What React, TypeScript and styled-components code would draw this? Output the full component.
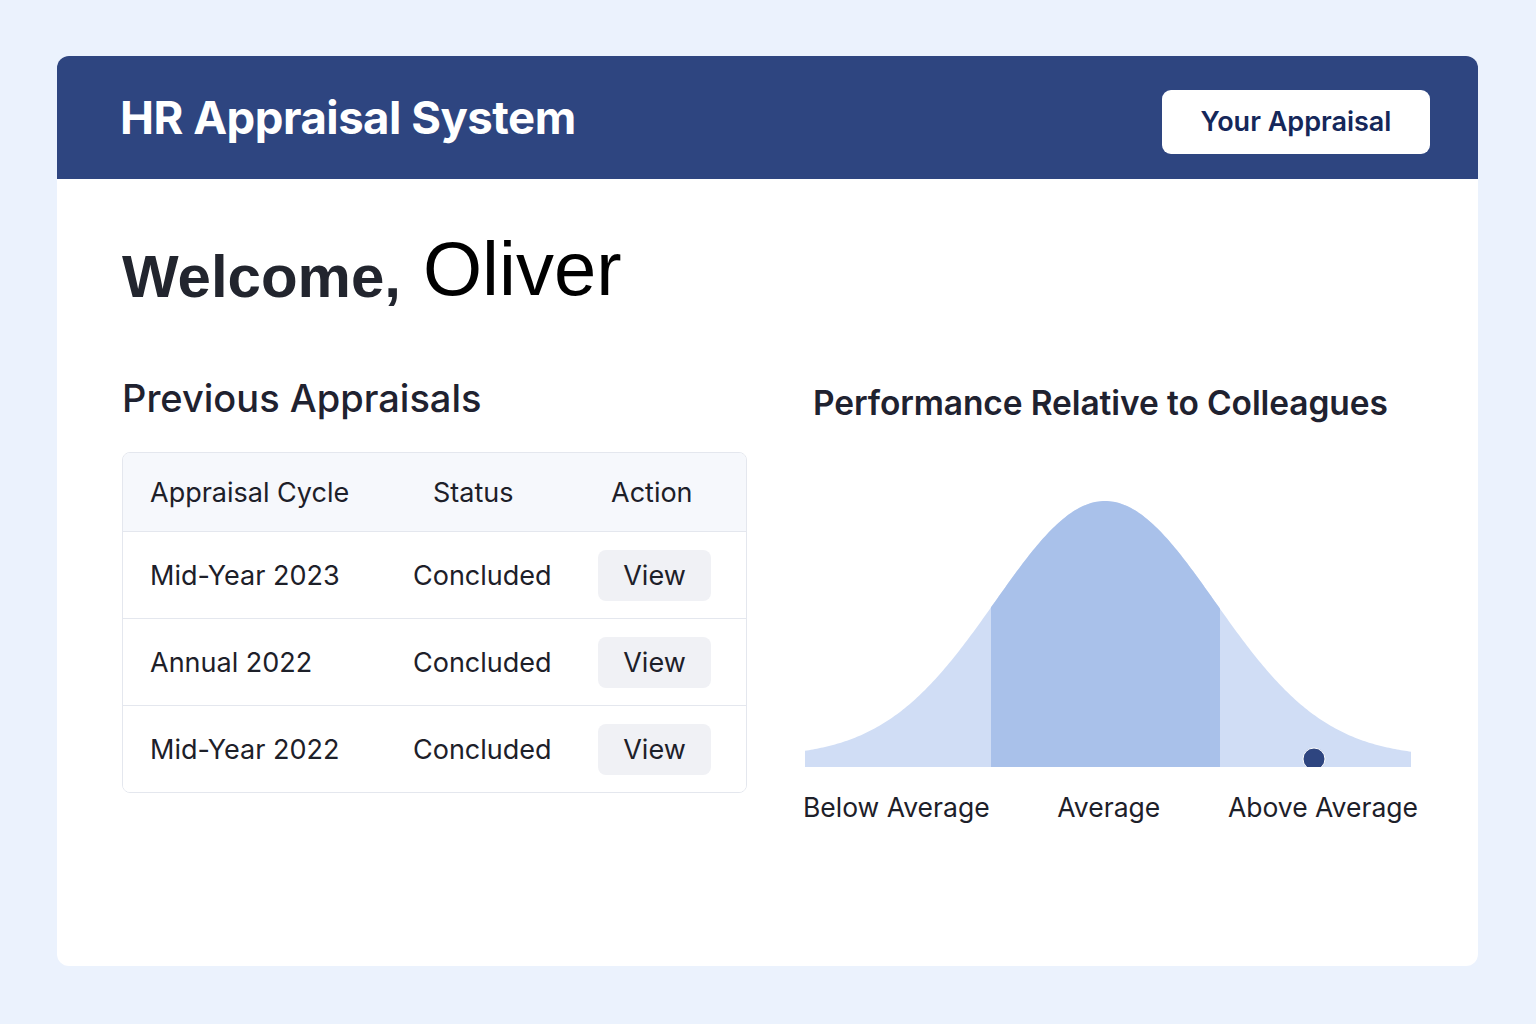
import styled, { createGlobalStyle } from "styled-components";

const GlobalStyle = createGlobalStyle`
  html, body {
    margin: 0;
    padding: 0;
    background: #ebf2fd;
    font-family: Inter, "Noto Sans", sans-serif;
  }
`

const Page = styled.div`
  min-height: 1024px;
  padding: 56px 58px 0 57px;
  box-sizing: border-box;
`

const Card = styled.div`
  background: #ffffff;
  border-radius: 12px;
  height: 910px;
  overflow: hidden;
`

const Header = styled.header`
  height: 123px;
  background: #2e4580;
  display: flex;
  align-items: center;
  justify-content: space-between;
  padding: 0 48px 0 63px;
  box-sizing: border-box;
`

const Title = styled.h1`
  margin: 0;
  color: #ffffff;
  font-size: 45.5px;
  font-weight: 700;
  letter-spacing: -0.5px;
`

const HeaderButton = styled.button`
  width: 268px;
  height: 64px;
  background: #ffffff;
  border: none;
  border-radius: 9px;
  color: #15275a;
  font-family: Inter, sans-serif;
  font-size: 27px;
  font-weight: 600;
  margin-top: 8px;
`

const Body = styled.div`
  padding: 48px 60px 0 65px;
`

const Welcome = styled.h2`
  margin: 0;
  display: flex;
  align-items: baseline;
  gap: 22px;
  font-family: "Liberation Sans", Arial, sans-serif;
  font-weight: 700;
  font-size: 60px;
  color: #22252e;
`

const Name = styled.span`
  font-family: "Liberation Sans", Arial, sans-serif;
  font-weight: 400;
  font-size: 76px;
  color: #000000;
  position: relative;
  top: -2px;
`

const Columns = styled.div`
  display: grid;
  grid-template-columns: 625px 1fr;
  gap: 56px;
  margin-top: 61px;
`

const Column = styled.section``

const SectionTitle = styled.h3`
  margin: 0;
  font-size: 38px;
  font-weight: 500;
  color: #1f2230;
`

const ChartTitle = styled.h3`
  margin: 0;
  padding: 8px 0 0 10px;
  font-size: 33.5px;
  font-weight: 600;
  color: #1f2230;
  letter-spacing: -0.1px;
`

const Table = styled.div`
  margin-top: 31px;
  border: 1px solid #e4e7ee;
  border-radius: 8px;
  overflow: hidden;
`

const Row = styled.div<{ $head?: boolean }>`
  display: grid;
  grid-template-columns: 263px 185px 1fr;
  align-items: center;
  height: ${p => (p.$head ? "78px" : "86px")};
  background: ${p => (p.$head ? "#f6f8fc" : "#ffffff")};
  border-top: ${p => (p.$head ? "none" : "1px solid #e4e7ee")};
  padding-left: 27px;
  font-size: 27px;
  color: #1d2029;
`

const Cell = styled.div<{ $shift?: number }>`
  padding-left: ${p => p.$shift ?? 0}px;
`

const ViewButton = styled.button`
  width: 113px;
  height: 51px;
  border: none;
  border-radius: 8px;
  background: #f0f1f5;
  font-family: Inter, sans-serif;
  font-size: 27px;
  color: #1d2029;
`

const ChartWrap = styled.div`
  margin-top: 76px;
  padding-left: 2px;
  line-height: 0;
`

const Labels = styled.div`
  display: flex;
  justify-content: space-between;
  margin-top: 24px;
  font-size: 26.5px;
  color: #1d2029;
  width: 615px;
`

const rows = [
  { cycle: "Mid-Year 2023", status: "Concluded" },
  { cycle: "Annual 2022", status: "Concluded" },
  { cycle: "Mid-Year 2022", status: "Concluded" },
]

const W = 606
const BASE = 268
const MU = 300
const SIGMA = 110
const AMP = 266
const FLOOR = 10

function curveY(x: number) {
  return BASE - FLOOR - (AMP - FLOOR) * Math.exp(-((x - MU) ** 2) / (2 * SIGMA * SIGMA))
}

function areaPath(x0: number, x1: number) {
  let d = `M${x0},${BASE}`
  for (let x = x0; x <= x1; x += 2) d += ` L${x},${curveY(x).toFixed(2)}`
  d += ` L${x1},${curveY(x1).toFixed(2)} L${x1},${BASE} Z`
  return d
}

function BellCurve() {
  return (
    <svg width={W} height={BASE} viewBox={`0 0 ${W} ${BASE}`}>
      <path d={areaPath(0, W)} fill="#d0ddf5" />
      <path d={areaPath(186, 415)} fill="#a9c1ea" />
      <circle cx={509} cy={260} r={11} fill="#2e4580" stroke="#ffffff" strokeWidth={1} />
    </svg>
  )
}

export default function App() {
  return (
    <Page>
      <GlobalStyle />
      <Card>
        <Header>
          <Title>HR Appraisal System</Title>
          <HeaderButton>Your Appraisal</HeaderButton>
        </Header>
        <Body>
          <Welcome>
            Welcome, <Name>Oliver</Name>
          </Welcome>
          <Columns>
            <Column>
              <SectionTitle>Previous Appraisals</SectionTitle>
              <Table>
                <Row $head>
                  <Cell>Appraisal Cycle</Cell>
                  <Cell $shift={20}>Status</Cell>
                  <Cell $shift={13}>Action</Cell>
                </Row>
                {rows.map(r => (
                  <Row key={r.cycle}>
                    <Cell>{r.cycle}</Cell>
                    <Cell>{r.status}</Cell>
                    <Cell>
                      <ViewButton>View</ViewButton>
                    </Cell>
                  </Row>
                ))}
              </Table>
            </Column>
            <Column>
              <ChartTitle>Performance Relative to Colleagues</ChartTitle>
              <ChartWrap>
                <BellCurve />
              </ChartWrap>
              <Labels>
                <span>Below Average</span>
                <span>Average</span>
                <span>Above Average</span>
              </Labels>
            </Column>
          </Columns>
        </Body>
      </Card>
    </Page>
  )
}
